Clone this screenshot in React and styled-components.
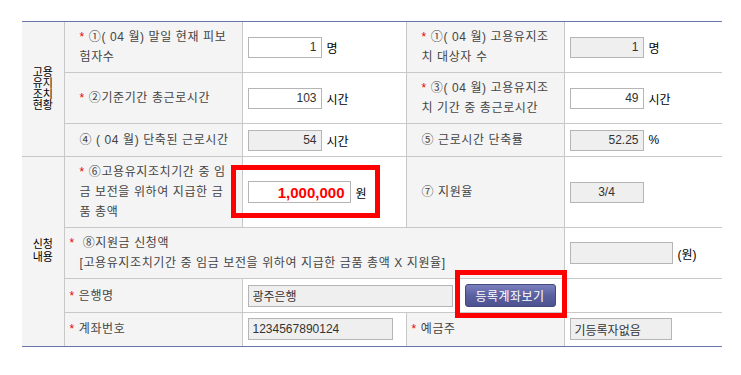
import React from "react";
import styled, { createGlobalStyle } from "styled-components";

const Global = createGlobalStyle`
  body {
    margin: 0;
    background: #fff;
    font-family: "Liberation Sans", "Noto Sans CJK KR", sans-serif;
    font-size: 12px;
    color: #444;
  }
`;

const Page = styled.div`
  padding: 21px 0 0 22px;
`;

const Sheet = styled.div`
  position: relative;
  width: 700px;
  border-top: 1px solid #6b74a8;
  border-bottom: 1px solid #6b74a8;
`;

const Table = styled.table`
  width: 700px;
  border-collapse: collapse;
  border-style: hidden;
  table-layout: fixed;
`;

const GroupHead = styled.th`
  background: #f4f4f4;
  border: 1px solid #c8c8c8;
  color: #000;
  font-weight: normal;
  font-size: 11px;
  line-height: ${(p) => p.$lh}px;
  text-align: center;
  vertical-align: middle;
  padding: 0;
`;

const Label = styled.td`
  background: #f4f4f4;
  border: 1px solid #c8c8c8;
  padding: 5px 6px 5px ${(p) => (p.$tight ? 5 : 15)}px;
  line-height: 20px;
  letter-spacing: 0.6px;
  white-space: nowrap;
  vertical-align: middle;
  color: #444;
`;

const Field = styled.td`
  background: #fff;
  border: 1px solid #c8c8c8;
  padding: 5px 5px;
  vertical-align: middle;
  white-space: nowrap;
`;

const Line = styled.div`
  padding-left: ${(p) => p.$indent || 0}px;
`;

const Star = styled.span`
  color: #e00;
  margin-right: 4px;
`;

const Input = styled.input`
  box-sizing: border-box;
  width: ${(p) => p.$w}px;
  height: ${(p) => p.$h || 21}px;
  border: 1px solid #b5b5b5;
  background: ${(p) => (p.$grey ? "#efefef" : "#fff")};
  text-align: ${(p) => p.$align || "right"};
  padding: 0 4px;
  font-family: "Liberation Sans", "Noto Sans CJK KR", sans-serif;
  font-size: 12px;
  color: #333;
  vertical-align: middle;
  outline: none;
`;

const Amount = styled(Input)`
  color: #f00;
  font-weight: bold;
  font-size: 15px;
  padding-right: 5px;
`;

const Unit = styled.span`
  color: #000;
  margin-left: 5px;
  vertical-align: middle;
`;

const Inline = styled.div`
  display: flex;
  align-items: center;
  gap: 12px;
`;

const Button = styled.button`
  box-sizing: border-box;
  width: 91px;
  height: 23px;
  border: 1px solid #444a80;
  border-radius: 3px;
  background: linear-gradient(#7a80bd, #5b61a0 50%, #4d5390);
  color: #fff;
  font-family: "Liberation Sans", "Noto Sans CJK KR", sans-serif;
  font-size: 12px;
  letter-spacing: 0.5px;
  padding: 0;
  cursor: pointer;
`;

const RedFrame = styled.div`
  position: absolute;
  left: ${(p) => p.$x}px;
  top: ${(p) => p.$y}px;
  width: ${(p) => p.$w}px;
  height: ${(p) => p.$h}px;
  box-sizing: border-box;
  border: 5px solid #f00;
  pointer-events: none;
`;

const App = () => (
  <Page>
    <Global />
    <Sheet>
      <Table>
        <colgroup>
          <col style={{ width: 42 }} />
          <col style={{ width: 178 }} />
          <col style={{ width: 164 }} />
          <col style={{ width: 158 }} />
          <col style={{ width: 158 }} />
        </colgroup>
        <tbody>
          <tr style={{ height: 50 }}>
            <GroupHead rowSpan={3} $lh={11}>
              고용
              <br />
              유지
              <br />
              조치
              <br />
              현황
            </GroupHead>
            <Label>
              <Line>
                <Star>*</Star>①( 04 월) 말일 현재 피보
              </Line>
              <Line>험자수</Line>
            </Label>
            <Field>
              <Input $w={74} readOnly value="1" />
              <Unit>명</Unit>
            </Field>
            <Label>
              <Line>
                <Star>*</Star>①( 04 월) 고용유지조
              </Line>
              <Line>치 대상자 수</Line>
            </Label>
            <Field>
              <Input $w={74} $grey readOnly value="1" />
              <Unit>명</Unit>
            </Field>
          </tr>
          <tr style={{ height: 51 }}>
            <Label>
              <Star>*</Star>②기준기간 총근로시간
            </Label>
            <Field>
              <Input $w={74} readOnly value="103" />
              <Unit>시간</Unit>
            </Field>
            <Label>
              <Line>
                <Star>*</Star>③( 04 월) 고용유지조
              </Line>
              <Line>치 기간 중 총근로시간</Line>
            </Label>
            <Field>
              <Input $w={74} readOnly value="49" />
              <Unit>시간</Unit>
            </Field>
          </tr>
          <tr style={{ height: 33 }}>
            <Label>④ ( 04 월) 단축된 근로시간</Label>
            <Field>
              <Input $w={74} $grey readOnly value="54" />
              <Unit>시간</Unit>
            </Field>
            <Label>⑤ 근로시간 단축률</Label>
            <Field>
              <Input $w={74} $grey readOnly value="52.25" />
              <Unit>%</Unit>
            </Field>
          </tr>
          <tr style={{ height: 71 }}>
            <GroupHead rowSpan={4} $lh={13}>
              신청
              <br />
              내용
            </GroupHead>
            <Label>
              <Line>
                <Star>*</Star>⑥고용유지조치기간 중 임
              </Line>
              <Line>금 보전을 위하여 지급한 금</Line>
              <Line>품 총액</Line>
            </Label>
            <Field>
              <Amount $w={103} $h={22} readOnly value="1,000,000" />
              <Unit>원</Unit>
            </Field>
            <Label>⑦ 지원율</Label>
            <Field>
              <Input $w={74} $grey $align="center" readOnly value="3/4" />
            </Field>
          </tr>
          <tr style={{ height: 51 }}>
            <Label colSpan={3} $tight>
              <Line>
                <Star>*</Star> ⑧지원금 신청액
              </Line>
              <Line $indent={10}>
                [고용유지조치기간 중 임금 보전을 위하여 지급한 금품 총액 X 지원율]
              </Line>
            </Label>
            <Field>
              <Input $w={103} $h={22} $grey readOnly value="" />
              <Unit>(원)</Unit>
            </Field>
          </tr>
          <tr style={{ height: 34 }}>
            <Label $tight>
              <Star>*</Star>은행명
            </Label>
            <Field colSpan={2}>
              <Inline>
                <Input $w={205} $h={22} $grey $align="left" readOnly value="광주은행" />
                <Button>등록계좌보기</Button>
              </Inline>
            </Field>
            <Field />
          </tr>
          <tr style={{ height: 33 }}>
            <Label $tight>
              <Star>*</Star>계좌번호
            </Label>
            <Field>
              <Input $w={145} $h={22} $grey $align="left" readOnly value="1234567890124" />
            </Field>
            <Label $tight>
              <Star>*</Star>예금주
            </Label>
            <Field>
              <Input $w={102} $h={22} $grey $align="left" readOnly value="기등록자없음" />
            </Field>
          </tr>
        </tbody>
      </Table>
      <RedFrame $x={209} $y={143} $w={149} $h={53} />
      <RedFrame $x={433} $y={248} $w={112} $h={48} />
    </Sheet>
  </Page>
);

export default App;
